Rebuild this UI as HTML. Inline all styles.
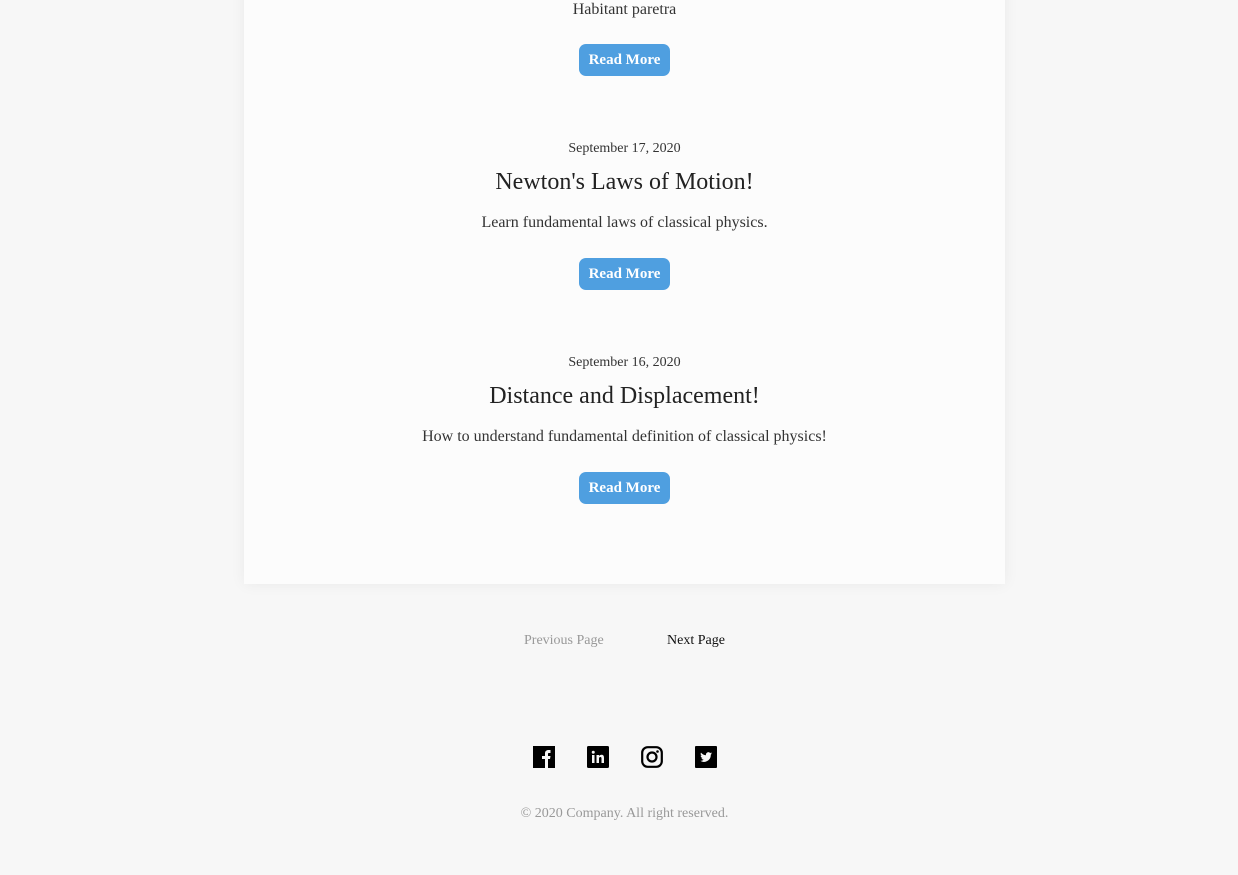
<!DOCTYPE html>
<html><head><style>
html,body{margin:0;padding:0;}
body{width:1238px;height:875px;background:#f7f7f7;position:relative;overflow:hidden;font-family:"Liberation Serif",serif;color:#333;}
.card{position:absolute;left:244px;top:-20px;width:761px;height:604px;background:#fcfcfc;box-shadow:0 0 14px rgba(0,0,0,0.06);}
.t{position:absolute;left:244px;width:761px;text-align:center;white-space:nowrap;}
.date{font-size:14px;color:#333;}
.title{font-size:24px;color:#222;}
.desc{font-size:16px;color:#333;}
.btn{position:absolute;left:579px;width:91px;height:32px;background:#4f9fe0;border-radius:7px;color:#fff;font-weight:bold;font-size:15px;text-align:center;line-height:32px;}
.ic{position:absolute;top:746px;width:22px;height:22px;}
</style></head><body>
<div class="card"></div>
<div class="t desc" style="top:1px;line-height:18px;">Habitant paretra</div>
<div class="btn" style="top:44px">Read More</div>

<div class="t date" style="top:141px;line-height:16px;">September 17, 2020</div>
<div class="t title" style="top:168px;line-height:28px;">Newton's Laws of Motion!</div>
<div class="t desc" style="top:214px;line-height:18px;">Learn fundamental laws of classical physics.</div>
<div class="btn" style="top:258px">Read More</div>

<div class="t date" style="top:355px;line-height:16px;">September 16, 2020</div>
<div class="t title" style="top:382px;line-height:28px;">Distance and Displacement!</div>
<div class="t desc" style="top:428px;line-height:18px;">How to understand fundamental definition of classical physics!</div>
<div class="btn" style="top:472px">Read More</div>

<div style="position:absolute;left:524px;top:632px;font-size:14px;color:#999;line-height:18px;">Previous Page</div>
<div style="position:absolute;left:667px;top:632px;font-size:14px;color:#111;line-height:18px;">Next Page</div>

<svg class="ic" style="left:533px" viewBox="0 0 22 22"><rect width="22" height="22" fill="#000"/><path d="M12 22V13H9V10H12V7.5C12 5 13.5 4 15.5 4H17.5V7H15.8C15 7 15 7.5 15 8V10H17.5L17 13H15V22Z" fill="#f7f7f7"/></svg>
<svg class="ic" style="left:587px" viewBox="0 0 22 22"><rect width="22" height="22" rx="1.5" fill="#000"/><rect x="5" y="9" width="2.5" height="8" fill="#f7f7f7"/><circle cx="6.25" cy="6.3" r="1.5" fill="#f7f7f7"/><path d="M9.5 9H12V10.2C12.5 9.3 13.5 8.8 14.6 8.8 16.4 8.8 17 10 17 12V17H14.5V12.5C14.5 11.5 14.2 11 13.4 11 12.5 11 12 11.6 12 12.6V17H9.5Z" fill="#f7f7f7"/></svg>
<svg class="ic" style="left:641px" viewBox="0 0 22 22"><rect x="1.2" y="1.2" width="19.6" height="19.6" rx="5.5" fill="none" stroke="#000" stroke-width="2.2"/><circle cx="11" cy="11" r="4.5" fill="none" stroke="#000" stroke-width="2.2"/><circle cx="16.5" cy="5.5" r="1.3" fill="#000"/></svg>
<svg class="ic" style="left:695px" viewBox="0 0 22 22"><rect width="22" height="22" rx="1" fill="#000"/><path d="M17 7.3c-.45.2-.9.33-1.4.4.5-.3.9-.8 1.1-1.350-.5.3-1 .5-1.55.6A2.450 2.450 0 0 0 11 9.2 6.9 6.9 0 0 1 6 6.6a2.450 2.450 0 0 0 .75 3.3c-.4 0-.8-.12-1.1-.3 0 1.2.85 2.2 1.950 2.4-.36.1-.75.12-1.1.05.3 1 1.2 1.7 2.3 1.7A4.9 4.9 0 0 1 5.2 14.8 6.9 6.9 0 0 0 15.8 8.9v-.3c.5-.35.9-.8 1.2-1.3z" fill="#f7f7f7"/></svg>

<div class="t" style="top:805px;font-size:14px;color:#999;line-height:18px;">© 2020 Company. All right reserved.</div>
</body></html>
